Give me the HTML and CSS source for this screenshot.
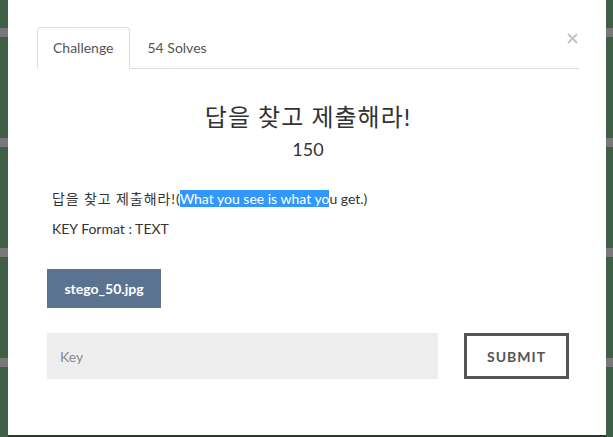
FILE: index.html
```html
<!DOCTYPE html>
<html lang="ko">
<head>
<meta charset="utf-8">
<title>Challenge</title>
<link rel="stylesheet" href="styles.css">
</head>
<body>
<div class="backdrop">
  <div class="modal">
    <button class="close" aria-label="Close">
      <svg width="11" height="11" viewBox="0 0 11 11"><path d="M1 1L10 10M10 1L1 10" stroke="#c4c4c4" stroke-width="2" fill="none"/></svg>
    </button>
    <ul class="tabs">
      <li class="tab active">Challenge</li>
      <li class="tab">54 Solves</li>
    </ul>
    <div class="pane">
      <h3 class="title">답을 찾고 제출해라!</h3>
      <div class="points">150</div>
      <div class="desc">
        <p><span class="ko">답을 찾고 제출해라!</span>(<span class="sel">What you see is what yo</span>u get.)</p>
        <p>KEY Format : TEXT</p>
      </div>
      <div class="files"><a class="file-btn">stego_50.jpg</a></div>
      <form class="submit-row">
        <input class="key" type="text" placeholder="Key">
        <button class="submit" type="button">SUBMIT</button>
      </form>
    </div>
  </div>
</div>
</body>
</html>
```
FILE: styles.css
```css
html, body {
  margin: 0;
  height: 100%;
}
body {
  font-family: Lato, "Noto Sans CJK KR", sans-serif;
  background: #3f5f46;
  overflow: hidden;
}
.backdrop {
  height: 437px;
  box-sizing: border-box;
  padding: 0 7px 0 8px;
  background: repeating-linear-gradient(180deg, #3f5f46 0 28px, #787878 28px 37px, #3f5f46 37px 110px);
}
.modal {
  position: relative;
  height: 437px;
  box-sizing: border-box;
  background: #fff;
  border-bottom: 2px solid #2d362f;
  padding: 27px 27px 0 29px;
}
.close {
  position: absolute;
  top: 33px;
  right: 28px;
  padding: 0;
  border: 0;
  background: none;
  width: 11px;
  height: 11px;
  display: block;
}
.close svg { display: block; }
.tabs {
  list-style: none;
  margin: 0;
  padding: 0;
  display: flex;
  border-bottom: 1px solid #ddd;
}
.tab {
  padding: 10px 15px;
  line-height: 20px;
  font-size: 14px;
  color: #555;
  border: 1px solid transparent;
  border-radius: 4px 4px 0 0;
  margin-right: 2px;
  margin-bottom: -1px;
}
.tab.active {
  border-color: #ddd #ddd transparent;
  background: #fff;
}
.title {
  margin: 35px 0 0;
  font-size: 24px;
  font-weight: 400;
  line-height: 26px;
  letter-spacing: 1px;
  text-align: center;
  color: #333;
}
.points {
  margin-top: 9px;
  font-size: 18px;
  line-height: 20px;
  text-align: center;
  color: #333;
}
.desc {
  margin-top: 30px;
  padding: 0 15px;
  font-size: 14px;
  line-height: 20px;
  color: #333;
}
.desc p { margin: 0 0 10px; }
.ko { letter-spacing: 0.9px; }
.sel {
  background: #3297fd;
  color: #fff;
}
.files {
  margin-top: 30px;
  padding: 0 10px;
}
.file-btn {
  display: inline-block;
  width: 114px;
  height: 39px;
  line-height: 39px;
  text-align: center;
  background: #5b7290;
  color: #fff;
  font-weight: 700;
  font-size: 14px;
}
.submit-row {
  margin: 25px 0 0;
  padding: 0 10px;
  display: flex;
  justify-content: space-between;
}
.key {
  width: 391px;
  height: 46px;
  box-sizing: border-box;
  border: 0;
  background: #eee;
  padding: 0 13px;
  font-family: Lato, sans-serif;
  font-size: 14px;
  color: #333;
}
.key::placeholder { color: #8a8a8a; }
.submit {
  width: 105px;
  height: 46px;
  box-sizing: border-box;
  border: 3px solid #555;
  background: #fff;
  font-family: Lato, sans-serif;
  font-weight: 700;
  font-size: 14px;
  letter-spacing: 1px;
  color: #555;
}
```
